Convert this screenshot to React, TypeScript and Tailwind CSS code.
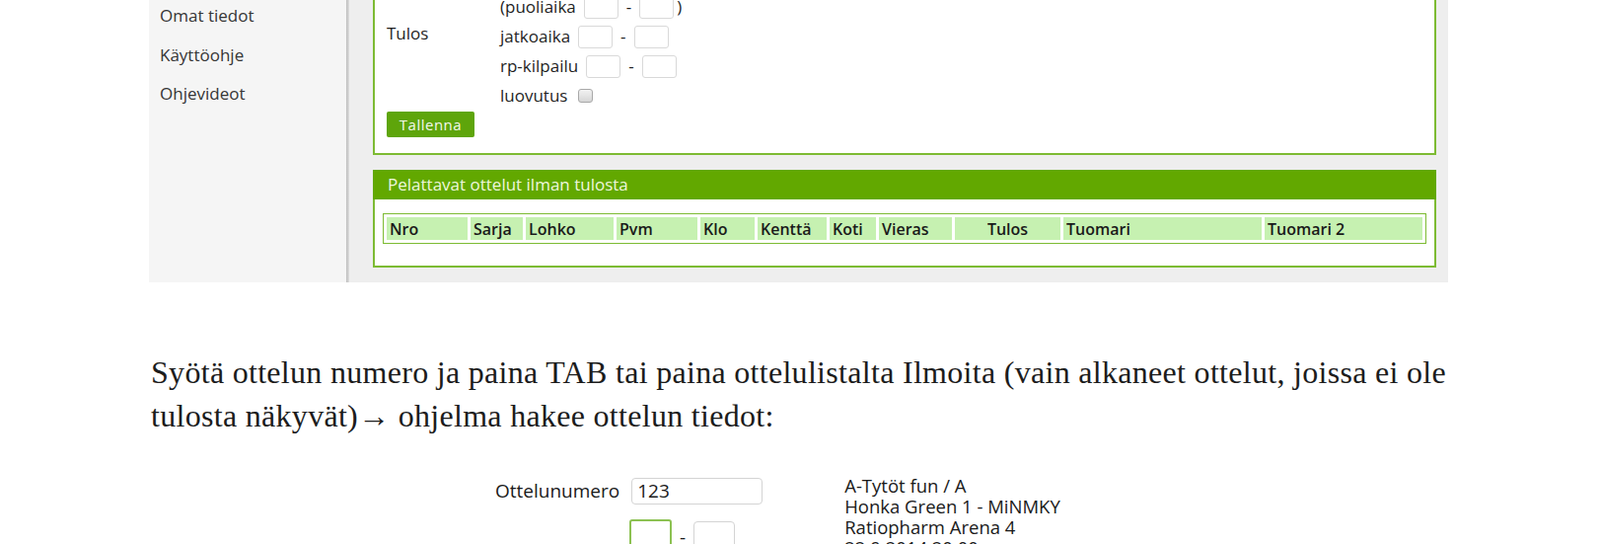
const SIDE_LINKS = ["Omat tiedot", "Käyttöohje", "Ohjevideot"];

// header cells of the "Pelattavat ottelut" table, widths read off the screenshot
const COLUMNS = [
  { label: "Nro", w: "w-[82px]" },
  { label: "Sarja", w: "w-[53px]" },
  { label: "Lohko", w: "w-[89px]" },
  { label: "Pvm", w: "w-[82px]" },
  { label: "Klo", w: "w-[55px]" },
  { label: "Kenttä", w: "w-[70px]" },
  { label: "Koti", w: "w-[47px]" },
  { label: "Vieras", w: "w-[74px]" },
  { label: "Tulos", w: "w-[107px] justify-center" },
  { label: "Tuomari", w: "w-[201px]" },
  { label: "Tuomari 2", w: "flex-1" },
];

const RESULT_ROWS = [
  { label: "(puoliaika", close: true },
  { label: "jatkoaika", close: false },
  { label: "rp-kilpailu", close: false },
];

function SmallBox() {
  return <input readOnly className="w-[35px] h-[23px] rounded-[3px] border border-[#d9d9d9] bg-white" />;
}

function ResultForm() {
  return (
    <div className="-mt-[10px] h-[167px] border-2 border-[#7dbb33] bg-white pl-[12px]">
      <div className="flex">
        <div className="mt-[29px] flex h-[26px] w-[115px] shrink-0 items-center">Tulos</div>
        <div className="flex flex-col">
          {RESULT_ROWS.map((row) => (
            <div key={row.label} className="flex h-[30px] items-center">
              <span>{row.label}</span>
              <span className="ml-[8px] flex items-center">
                <SmallBox />
              </span>
              <span className="mx-[8px]">-</span>
              <SmallBox />
              {row.close && <span className="ml-[3px]">)</span>}
            </div>
          ))}
          <div className="flex h-[30px] items-center">
            <span>luovutus</span>
            <span className="ml-[11px] h-[14px] w-[15px] rounded-[3px] border border-[#a8a8a8] bg-gradient-to-b from-[#f2f2f2] to-[#d6d6d6]" />
          </div>
        </div>
      </div>
      <button className="mt-px flex h-[26px] w-[89px] items-center justify-center rounded-[2px] bg-[#5ea50b] text-[15px] tracking-[0.5px] text-[#f4f8ee]">
        Tallenna
      </button>
    </div>
  );
}

function MatchesPanel() {
  return (
    <div className="mt-[15px]">
      <div className="flex h-[30px] items-center bg-[#62a800] pl-[15px] text-[#eef7dd]">
        Pelattavat ottelut ilman tulosta
      </div>
      <div className="border-x-2 border-b-2 border-[#7dbb33] bg-white px-[8px] pt-[14px] pb-[22px]">
        <div className="flex gap-[3px] border border-[#7dbb33] p-[3px]">
          {COLUMNS.map((col) => (
            <div
              key={col.label}
              className={`${col.w} flex h-[23px] items-center bg-[#c6f1b1] px-[3px] text-[16px] font-semibold text-[#1a1a1a]`}
            >
              {col.label}
            </div>
          ))}
        </div>
      </div>
    </div>
  );
}

export default function App() {
  return (
    <div className="h-[551px] w-[1622px] overflow-hidden bg-white">
      {/* screenshot of the result entry page */}
      <div
        className="ml-[151px] flex h-[286px] w-[1317px] overflow-hidden text-[17px] font-medium text-[#1f1f1f]"
        style={{ fontFamily: '"Open Sans", "DejaVu Sans", sans-serif' }}
      >
        <div className="w-[200px] shrink-0 bg-[#f5f5f5] pl-[11px]">
          <ul className="-mt-[4px] text-[#363636]">
            {SIDE_LINKS.map((link) => (
              <li key={link} className="flex h-[39.5px] items-center">
                {link}
              </li>
            ))}
          </ul>
        </div>
        <div className="w-[3px] shrink-0 bg-gradient-to-r from-[#bdbdbd] to-[#dedede]" />
        <div className="flex-1 bg-[#eeeeee] pl-[24px] pr-[12px]">
          <ResultForm />
          <MatchesPanel />
        </div>
      </div>

      <p
        className="mt-[69px] ml-[153px] w-[1316px] text-[32px] leading-[44.3px] tracking-[0.3px] text-[#1c1c1c]"
        style={{ fontFamily: '"Liberation Serif", "Times New Roman", serif' }}
      >
        Syötä ottelun numero ja paina TAB tai paina ottelulistalta Ilmoita (vain alkaneet ottelut, joissa ei ole
        tulosta näkyvät)→ ohjelma hakee ottelun tiedot:
      </p>

      {/* screenshot of the match lookup form */}
      <div
        className="mt-[40px] flex text-[#1a1a1a]"
        style={{ fontFamily: '"Open Sans", "DejaVu Sans", sans-serif' }}
      >
        <div className="ml-[502px]">
          <div className="flex items-center">
            <span className="text-[19px] leading-[27px]">Ottelunumero</span>
            <input
              readOnly
              value="123"
              className="ml-[12px] h-[27.4px] w-[133px] rounded-[4px] border border-[#d4d4d4] pl-[5px] text-[19px]"
            />
          </div>
          <div className="mt-[15.3px] ml-[135.6px] flex items-start">
            <input readOnly className="h-[30px] w-[43.5px] rounded-[3px] border-2 border-[#8cc152]" />
            <span className="mx-[8px] mt-[4px] text-[19px]">-</span>
            <input readOnly className="mt-[1.3px] h-[30px] w-[41.7px] rounded-[4px] border border-[#d4d4d4]" />
          </div>
        </div>
        <div className="-mt-[3px] ml-[83px] text-[18.5px] leading-[21.3px]">
          <div>A-Tytöt fun / A</div>
          <div>Honka Green 1 - MiNMKY</div>
          <div>Ratiopharm Arena 4</div>
          <div>22.9.2014 20:00</div>
        </div>
      </div>
    </div>
  );
}
